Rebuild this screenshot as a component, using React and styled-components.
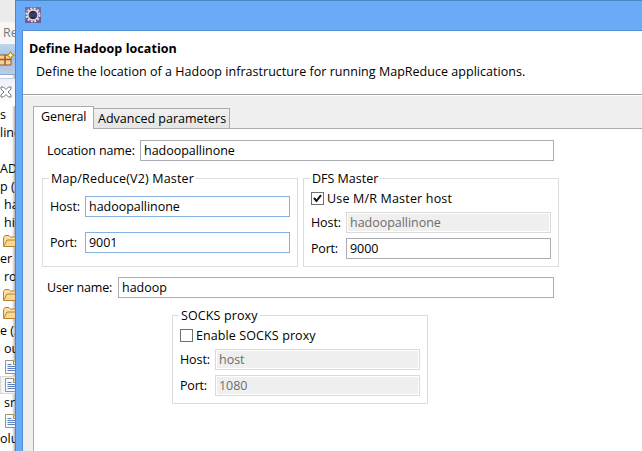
import React from 'react';
import styled, { createGlobalStyle } from 'styled-components';

const Global = createGlobalStyle`
  * { box-sizing: border-box; }
  html, body { margin: 0; overflow: hidden; background: #fff; }
  body { font: 12.5px/18px "Open Sans", "Noto Sans", sans-serif; color: #000; }
`;

const Screen = styled.div`
  display: flex;
  width: 642px;
  height: 451px;
  overflow: hidden;
`;

/* Workbench strip visible behind the dialog */
const Workbench = styled.div`
  flex: none;
  width: 15px;
  height: 451px;
  overflow: hidden;
  white-space: nowrap;
  background: #fff;
  box-shadow: inset -3px 0 3px -2px #9a9a9a;
`;
const WorkbenchTitle = styled.div`
  height: 22px;
  background: #ebebeb;
`;
const WorkbenchMenu = styled.div`
  height: 22px;
  padding: 2px 0 0 3px;
  background: #f7f7f7;
  color: #777;
`;
const WorkbenchToolbar = styled.div`
  height: 31px;
  padding-top: 7px;
  background: linear-gradient(#bfd5ed, #a3bfe0 50%, #b9cee8);
  border-bottom: 1px solid #8fa9cb;
  svg { display: block; }
`;
const ViewTab = styled.div`
  height: 28px;
  margin-top: 3px;
  padding-top: 7px;
  background: linear-gradient(#eef1f8, #fff);
  border-top: 1px solid #c5cbe0;
  svg { display: block; }
`;
const TreeRow = styled.div`
  height: 18px;
  padding-left: ${(p) => p.$indent || 0}px;
  background: ${(p) => (p.$selected ? '#f4f4f4' : 'transparent')};
  box-shadow: ${(p) => (p.$selected ? 'inset 0 0 0 1px #d9d9d9' : 'none')};
  svg { display: block; }
`;

const Dialog = styled.div`
  display: flex;
  flex-direction: column;
  flex: 1;
  border: solid #4a86c5;
  border-width: 1px 0 0 1px;
  background: #6aabf7;
`;
const TitleBar = styled.div`
  height: 29px;
  padding: 6px 0 0 9px;
`;
const Body = styled.div`
  display: flex;
  flex-direction: column;
  flex: 1;
  margin-left: 6px;
  border: solid #5590d2;
  border-width: 1px 0 0 1px;
  background: #efefef;
`;
const Header = styled.div`
  height: 64px;
  padding: 9px 0 0 6px;
  background: #fff;
  border-bottom: 1px solid #a0a0a0;
  box-shadow: 0 1px #fff;
`;
const Heading = styled.div`
  font-weight: 700;
  height: 23px;
  letter-spacing: 0.06px;
`;
const Description = styled.div`
  padding-left: 7px;
`;

const Label = styled.span`
  display: block;
  flex: none;
  white-space: nowrap;
  height: 18px;
  width: ${(p) => (p.$w ? `${p.$w}px` : 'auto')};
  letter-spacing: ${(p) => p.$track || 0}px;
`;

const TabFolder = styled.div`
  display: flex;
  flex-direction: column;
  flex: 1;
  margin: 11px 0 0 10px;
`;
const Tabs = styled.div`
  display: flex;
  align-items: flex-end;
  height: 23px;
`;
const ActiveTab = styled.div`
  width: 61px;
  height: 23px;
  margin-bottom: -1px;
  padding: 1px 0 0 7px;
  border: 1px solid #acacac;
  border-bottom: 0;
  background: #fff;
  align-self: flex-start;
  flex: none;
  z-index: 1;
`;
const Tab = styled.div`
  width: 136px;
  height: 20px;
  padding: 1px 0 0 4px;
  border: 1px solid #acacac;
  border-width: 1px 1px 0 0;
  background: linear-gradient(#f0f0f0, #e5e5e5);
  margin-bottom: 1px;
`;
const Panel = styled.div`
  flex: 1;
  margin-top: -1px;
  padding: 11px 0 0 13px;
  border: solid #acacac;
  border-width: 1px 0 0 1px;
  background: #fff;
`;

const Field = styled.div`
  display: flex;
  align-items: center;
  height: 21px;
  margin-top: ${(p) => p.$gap || 0}px;
`;
const edges = { normal: '#ababb3', active: '#86b0df', disabled: '#dadada' };
const Input = styled.div`
  flex: none;
  width: ${(p) => p.$w || 205}px;
  height: 21px;
  padding: 0 0 0 3px;
  line-height: 20px;
  white-space: nowrap;
  letter-spacing: -0.03px;
  border: 1px solid ${(p) => edges[p.$state || 'normal']};
  background: ${(p) => (p.$state === 'disabled' ? '#efefef' : '#fff')};
  color: ${(p) => (p.$state === 'disabled' ? '#6d6d6d' : '#000')};
  box-shadow: inset 0 0 0 1px #fff;
`;

const Groups = styled.div`
  display: flex;
  gap: 5px;
  margin: 9px 0 10px -5px;
`;
const Group = styled.fieldset`
  width: 256px;
  height: 97px;
  min-width: 0;
  margin: 0;
  padding: 1px 0 0 7px;
  border: 1px solid #dcdcdc;
`;
const Legend = styled.legend`
  height: 17px;
  margin-left: -1px;
  padding: 0 2px;
  white-space: nowrap;
  letter-spacing: ${(p) => p.$track || 0}px;
`;
const SocksRow = styled.div`
  margin: 9px 0 0 125px;
`;
const CheckRow = styled.div`
  display: flex;
  align-items: center;
  gap: 3px;
  height: 13px;
  margin-top: ${(p) => p.$gap || 0}px;
`;
const Box = styled.span`
  display: block;
  flex: none;
  width: 13px;
  height: 13px;
  border: 1px solid #707070;
  background: #fff;
  svg { display: block; }
`;

const GearIcon = () => (
  <svg width="16" height="16" viewBox="0 0 16 16">
    <rect width="16" height="16" fill="#6a5a9c" />
    <path d="M0 0h16v4L0 12z" fill="#8476ae" opacity=".6" />
    <circle cx="8" cy="8" r="6.5" fill="none" stroke="#e6e2dc" strokeWidth="2" strokeDasharray="1.9 1.503" />
    <circle cx="8" cy="8" r="5" fill="#2e2855" stroke="#e6e2dc" strokeWidth="1.3" />
    <path d="M4 7h8M4 9h8" stroke="#514a7c" />
  </svg>
);
const PerspectiveIcon = () => (
  <svg width="15" height="16" viewBox="0 0 15 16">
    <path d="M-2 4h13v10H-2z" fill="#f7cf9b" stroke="#9a5a26" />
    <path d="M5 4v10M-2 8.5h13" stroke="#9a5a26" strokeWidth="1.5" />
    <path d="M10.5 0.500l1.200 2.500 2.600 1.200-2.600 1.200-1.200 2.500-1.200-2.500-2.600-1.200 2.600-1.200z" fill="#fff3b5" stroke="#b18410" />
  </svg>
);
const CloseIcon = () => (
  <svg width="12" height="12" viewBox="0 0 12 12">
    <path d="M1 1h2.500L6 3.500 8.500 1H11v2L8 6l3 3v2H8.500L6 8.500 3.500 11H1V9l3-3-3-3z" fill="#fff" stroke="#777" />
  </svg>
);
const FolderIcon = () => (
  <svg width="16" height="18" viewBox="0 0 16 18">
    <path d="M.5 14V5.500L2 3.500h4L7.500 5H13v3" fill="#f8dfa4" stroke="#b88335" />
    <path d="M.5 14.500L4 8h12l-3 6.500z" fill="#fbd891" stroke="#b88335" />
  </svg>
);
const FileIcon = () => (
  <svg width="13" height="18" viewBox="0 0 13 18">
    <path d="M.5 2.500h8l4 4v9H.5z" fill="#f5f9ff" stroke="#a39366" />
    <path d="M8.500 2.500v4h4" fill="#ead9a0" stroke="#a39366" />
    <path d="M2.500 6.500h4M2.500 8.500h8M2.500 10.500h8M2.500 12.500h8" stroke="#5e82b9" />
  </svg>
);
const Check = () => (
  <svg width="11" height="11" viewBox="0 0 11 11">
    <path d="M2 5l2.500 3L9 2.200" fill="none" stroke="#111" strokeWidth="2" />
  </svg>
);

const tree = [
  { text: 's' }, { text: 'line' }, {}, { text: 'AD' }, { text: 'p (' },
  { text: 'ha', indent: 4 }, { text: 'hi', indent: 4 }, { icon: 'folder', indent: 3 },
  { text: 'er (' }, { text: 'ro', indent: 4 }, { icon: 'folder', indent: 3 },
  { icon: 'folder', indent: 3 }, { text: 'e (2' }, { text: 'ou', indent: 4 },
  { icon: 'file', indent: 5 }, { icon: 'file', indent: 5, selected: true },
  { text: 'sr', indent: 4 }, { icon: 'file', indent: 5 }, { text: 'olu' },
];
const treeIcons = { folder: <FolderIcon />, file: <FileIcon /> };

export default function App() {
  return (
    <Screen>
      <Global />
      <Workbench>
        <WorkbenchTitle />
        <WorkbenchMenu>Re</WorkbenchMenu>
        <WorkbenchToolbar><PerspectiveIcon /></WorkbenchToolbar>
        <ViewTab><CloseIcon /></ViewTab>
        {tree.map((r, i) => (
          <TreeRow key={i} $indent={r.indent} $selected={r.selected}>
            {r.icon ? treeIcons[r.icon] : r.text}
          </TreeRow>
        ))}
      </Workbench>
      <Dialog>
        <TitleBar><GearIcon /></TitleBar>
        <Body>
          <Header>
            <Heading>Define Hadoop location</Heading>
            <Description><Label $track={0.03}>Define the location of a Hadoop infrastructure for running MapReduce applications.</Label></Description>
          </Header>
          <TabFolder>
            <Tabs>
              <ActiveTab><Label $track={-0.1}>General</Label></ActiveTab>
              <Tab><Label>Advanced parameters</Label></Tab>
            </Tabs>
            <Panel>
              <Field><Label $w={93} $track={-0.12}>Location name:</Label><Input $w={414}>hadoopallinone</Input></Field>
              <Groups>
                <Group>
                  <Legend $track={0.17}>Map/Reduce(V2) Master</Legend>
                  <Field $gap={8}><Label $w={35} $track={-0.1}>Host:</Label><Input $state="active">hadoopallinone</Input></Field>
                  <Field $gap={15}><Label $w={35} $track={-0.2}>Port:</Label><Input $state="active">9001</Input></Field>
                </Group>
                <Group>
                  <Legend>DFS Master</Legend>
                  <CheckRow $gap={4}><Box><Check /></Box><Label $track={0.18}>Use M/R Master host</Label></CheckRow>
                  <Field $gap={7}><Label $w={35} $track={-0.1}>Host:</Label><Input $state="disabled">hadoopallinone</Input></Field>
                  <Field $gap={5}><Label $w={35} $track={-0.2}>Port:</Label><Input>9000</Input></Field>
                </Group>
              </Groups>
              <Field><Label $w={71} $track={-0.17}>User name:</Label><Input $w={436}>hadoop</Input></Field>
              <SocksRow>
                <Group>
                  <Legend $track={0.12}>SOCKS proxy</Legend>
                  <CheckRow $gap={4}><Box /><Label $track={0.1}>Enable SOCKS proxy</Label></CheckRow>
                  <Field $gap={7}><Label $w={35} $track={-0.1}>Host:</Label><Input $state="disabled">host</Input></Field>
                  <Field $gap={5}><Label $w={35} $track={-0.2}>Port:</Label><Input $state="disabled">1080</Input></Field>
                </Group>
              </SocksRow>
            </Panel>
          </TabFolder>
        </Body>
      </Dialog>
    </Screen>
  );
}
